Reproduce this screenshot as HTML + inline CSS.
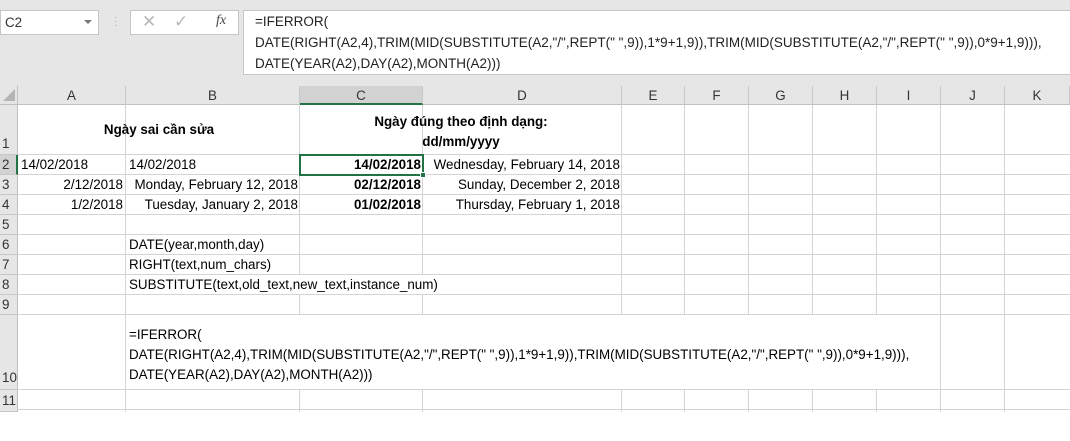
<!DOCTYPE html>
<html><head><meta charset="utf-8"><style>
*{margin:0;padding:0;box-sizing:border-box}
body{width:1070px;height:412px;overflow:hidden;background:#fff;font-family:"Liberation Sans",Arial,sans-serif;font-size:13.4px;color:#000;position:relative}
.a{position:absolute;white-space:nowrap}
.top{left:0;top:0;width:1070px;height:86px;background:#e6e6e6}
.hl{position:absolute;height:1px;background:#d4d4d4;left:18px;width:1052px}
.vl{position:absolute;width:1px;background:#d4d4d4;top:105px;height:307px}
.ch{position:absolute;top:86px;height:19px;background:#e6e6e6;border-right:1px solid #c8c8c8;border-bottom:1px solid #c0c0c0;text-align:center;line-height:19px;color:#333}
.rh{position:absolute;left:0;width:18px;background:#e6e6e6;border-bottom:1px solid #c8c8c8;border-right:1px solid #c0c0c0;color:#333;padding-left:2px}
.t{position:absolute;white-space:nowrap;line-height:20px}
.b{font-weight:bold}
.r{text-align:right}
.c{text-align:center}
</style></head><body>
<div class="a top"></div>
<div class="a" style="left:0;top:10px;width:99px;height:25px;background:#fff;border:1px solid #c6c6c6;line-height:23px;padding-left:4px;color:#333">C2</div>
<div class="a" style="left:84px;top:20px;width:0;height:0;border-left:4px solid transparent;border-right:4px solid transparent;border-top:4px solid #777"></div>
<div class="a" style="left:114px;top:16px;color:#aaa;font-size:10px;line-height:4px">·<br>·<br>·</div>
<div class="a" style="left:130px;top:10px;width:109px;height:25px;background:#fff;border:1px solid #c6c6c6"></div>
<div class="a" style="left:142px;top:12px;color:#b8b8b8;font-size:17px">✕</div>
<div class="a" style="left:174px;top:12px;color:#b8b8b8;font-size:17px">✓</div>
<div class="a" style="left:216px;top:13px;color:#444;font-family:'Liberation Serif',serif;font-style:italic;font-size:14px">fx</div>
<div class="a" style="left:243px;top:10px;width:827px;height:65px;background:#fff;border:1px solid #c6c6c6;border-right:none;padding:0 0 0 11px;line-height:21px;color:#222;font-size:13.5px">=IFERROR(<br>DATE(RIGHT(A2,4),TRIM(MID(SUBSTITUTE(A2,"/",REPT(" ",9)),1*9+1,9)),TRIM(MID(SUBSTITUTE(A2,"/",REPT(" ",9)),0*9+1,9))),<br>DATE(YEAR(A2),DAY(A2),MONTH(A2)))</div>

<div class="a" style="left:0;top:86px;width:18px;height:19px;background:#e6e6e6;border-right:1px solid #c0c0c0;border-bottom:1px solid #c0c0c0"></div>
<div class="a" style="left:3px;top:89px;width:0;height:0;border-left:12px solid transparent;border-bottom:12px solid #b4b4b4"></div>

<div class="ch" style="left:18px;width:108px">A</div>
<div class="ch" style="left:126px;width:174px">B</div>
<div class="ch" style="left:300px;width:123px;background:#d2d2d2;border-bottom:2px solid #217346">C</div>
<div class="ch" style="left:423px;width:199px">D</div>
<div class="ch" style="left:622px;width:63px">E</div>
<div class="ch" style="left:685px;width:64px">F</div>
<div class="ch" style="left:749px;width:64px">G</div>
<div class="ch" style="left:813px;width:64px">H</div>
<div class="ch" style="left:877px;width:64px">I</div>
<div class="ch" style="left:941px;width:64px">J</div>
<div class="ch" style="left:1005px;width:65px">K</div>

<div class="rh" style="top:105px;height:50px;line-height:78px">1</div>
<div class="rh" style="top:155px;height:20px;line-height:20px;background:#d2d2d2;border-right:2px solid #217346">2</div>
<div class="rh" style="top:175px;height:20px;line-height:20px">3</div>
<div class="rh" style="top:195px;height:20px;line-height:20px">4</div>
<div class="rh" style="top:215px;height:20px;line-height:20px">5</div>
<div class="rh" style="top:235px;height:20px;line-height:20px">6</div>
<div class="rh" style="top:255px;height:20px;line-height:20px">7</div>
<div class="rh" style="top:275px;height:20px;line-height:20px">8</div>
<div class="rh" style="top:295px;height:20px;line-height:20px">9</div>
<div class="rh" style="top:315px;height:75px;line-height:126px">10</div>
<div class="rh" style="top:390px;height:22px;line-height:22px">11</div>

<div class="hl" style="top:154px"></div><div class="hl" style="top:174px"></div><div class="hl" style="top:194px"></div><div class="hl" style="top:214px"></div><div class="hl" style="top:234px"></div><div class="hl" style="top:254px"></div><div class="hl" style="top:274px"></div><div class="hl" style="top:294px"></div><div class="hl" style="top:314px"></div><div class="hl" style="top:389px"></div><div class="hl" style="top:409px"></div>
<div class="vl" style="left:125px"></div><div class="vl" style="left:299px"></div><div class="vl" style="left:422px"></div><div class="vl" style="left:621px"></div><div class="vl" style="left:684px"></div><div class="vl" style="left:748px"></div><div class="vl" style="left:812px"></div><div class="vl" style="left:876px"></div><div class="vl" style="left:940px"></div><div class="vl" style="left:1004px"></div>

<!-- overflow cover -->
<div class="a" style="left:126px;top:275px;width:495px;height:19px;background:#fff"></div>
<div class="a" style="left:126px;top:315px;width:814px;height:74px;background:#fff"></div>

<div class="t b c" style="left:18px;top:120px;width:282px">Ngày sai cần sửa</div>
<div class="t b c" style="left:300px;top:112px;width:322px">Ngày đúng theo định dạng:</div>
<div class="t b c" style="left:300px;top:132px;width:322px">dd/mm/yyyy</div>

<div class="t" style="left:21px;top:155px">14/02/2018</div>
<div class="t r" style="left:18px;top:175px;width:105px">2/12/2018</div>
<div class="t r" style="left:18px;top:195px;width:105px">1/2/2018</div>
<div class="t" style="left:129px;top:155px">14/02/2018</div>
<div class="t r" style="left:126px;top:175px;width:172px">Monday, February 12, 2018</div>
<div class="t r" style="left:126px;top:195px;width:172px">Tuesday, January 2, 2018</div>
<div class="t b r" style="left:300px;top:155px;width:121px">14/02/2018</div>
<div class="t b r" style="left:300px;top:175px;width:121px">02/12/2018</div>
<div class="t b r" style="left:300px;top:195px;width:121px">01/02/2018</div>
<div class="t r" style="left:423px;top:155px;width:197px">Wednesday, February 14, 2018</div>
<div class="t r" style="left:423px;top:175px;width:197px">Sunday, December 2, 2018</div>
<div class="t r" style="left:423px;top:195px;width:197px">Thursday, February 1, 2018</div>

<div class="a" style="left:299px;top:154px;width:125px;height:22px;border:2px solid #217346"></div>
<div class="a" style="left:420px;top:172px;width:6px;height:6px;background:#217346;border:1px solid #fff"></div>

<div class="t" style="left:129px;top:235px">DATE(year,month,day)</div>
<div class="t" style="left:129px;top:255px">RIGHT(text,num_chars)</div>
<div class="t" style="left:129px;top:275px">SUBSTITUTE(text,old_text,new_text,instance_num)</div>
<div class="t" style="left:129px;top:325px;line-height:20px">=IFERROR(<br>DATE(RIGHT(A2,4),TRIM(MID(SUBSTITUTE(A2,"/",REPT(" ",9)),1*9+1,9)),TRIM(MID(SUBSTITUTE(A2,"/",REPT(" ",9)),0*9+1,9))),<br>DATE(YEAR(A2),DAY(A2),MONTH(A2)))</div>
</body></html>
